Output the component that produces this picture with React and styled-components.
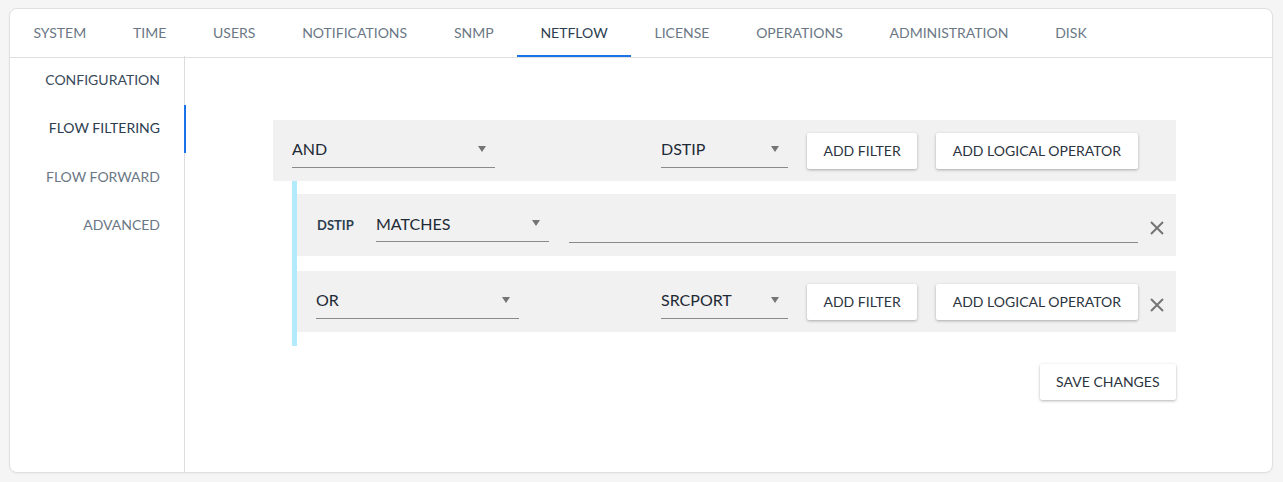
import React from "react"
import styled, { createGlobalStyle } from "styled-components"

const GlobalStyle = createGlobalStyle`
  body {
    margin: 0;
    background: #f5f5f5;
    font-family: Lato, "Open Sans", sans-serif;
  }
`

const Page = styled.div`
  padding: 8px 10px 9px 9px;
`

const Card = styled.div`
  height: 465px;
  box-sizing: border-box;
  background: #fff;
  border: 1px solid #e0e0e0;
  border-radius: 8px;
  box-shadow: 0 1px 3px rgba(0, 0, 0, 0.04);
  display: flex;
  flex-direction: column;
  overflow: hidden;
`

const Tabs = styled.div`
  display: flex;
  height: 48px;
  border-bottom: 1px solid #e0e0e0;
  flex-shrink: 0;
`

const Tab = styled.div`
  padding: 0 23.4px 2px;
  display: flex;
  align-items: center;
  font-size: 14px;
  color: ${p => (p.$active ? "#2c3e50" : "#6b7785")};
  box-shadow: ${p => (p.$active ? "inset 0 -2px 0 #1a73e8" : "none")};
`

const Body = styled.div`
  flex: 1;
  display: flex;
`

const Sidebar = styled.div`
  width: 174px;
  border-right: 1px solid #dcdcdc;
  display: flex;
  flex-direction: column;
  margin-top: -2px;
`

const SideItem = styled.div`
  position: relative;
  height: 48.5px;
  box-sizing: border-box;
  display: flex;
  align-items: center;
  justify-content: flex-end;
  padding: 0 24px 2px 0;
  font-size: 14px;
  color: ${p => p.$color};
  &::after {
    content: "";
    display: ${p => (p.$active ? "block" : "none")};
    position: absolute;
    right: -2px;
    top: 0;
    bottom: 0;
    width: 2px;
    background: #1a73e8;
  }
`

const Main = styled.div`
  flex: 1;
  padding: 62px 96px 0 88px;
`

const Row = styled.div`
  display: flex;
  background: #f1f1f1;
  height: ${p => p.$h || 61}px;
`

const LeftCell = styled.div`
  flex: 1;
  display: flex;
  align-items: center;
  padding-left: ${p => p.$pad || 19}px;
  gap: 20px;
`

const RightCell = styled.div`
  width: 533px;
  box-sizing: border-box;
  padding-left: 18px;
  display: flex;
  align-items: center;
  gap: 19px;
`

const Select = styled.div`
  width: ${p => p.$w}px;
  height: 34px;
  box-sizing: border-box;
  padding-bottom: 3px;
  border-bottom: 1px solid #8a8a8a;
  display: flex;
  align-items: center;
  justify-content: space-between;
  font-size: 16px;
  color: #1e2a36;
  padding-right: 9px;
  &::after {
    content: "";
    border-left: 4px solid transparent;
    border-right: 4px solid transparent;
    border-top: 6px solid #757575;
  }
`

const TextInput = styled.div`
  flex: 1;
  height: 34px;
  border-bottom: 1px solid #8a8a8a;
`

const FieldLabel = styled.span`
  width: 39px;
  font-size: 13px;
  font-weight: 700;
  color: #2c3e50;
`

const Button = styled.button`
  height: 36px;
  padding: 0 16.5px 1px;
  border: none;
  border-radius: 2px;
  background: #fff;
  box-shadow: 0 1px 3px rgba(0, 0, 0, 0.3);
  font-family: Lato, sans-serif;
  font-size: 14px;
  color: #2b3440;
  white-space: nowrap;
`

const CloseSlot = styled.div`
  width: 38px;
  flex-shrink: 0;
  align-self: stretch;
  display: flex;
  align-items: center;
  justify-content: center;
  padding-top: 6px;
  margin-left: ${p => (p.$inline ? "-19px" : "0")};
`

const Children = styled.div`
  margin-left: 19px;
  border-left: 5px solid #b3ebfd;
  padding: 13px 0 14px;
  display: flex;
  flex-direction: column;
  gap: 15px;
`

const Footer = styled.div`
  display: flex;
  justify-content: flex-end;
  margin-top: 18px;
`

const CloseIcon = () => (
  <svg width="14" height="14" viewBox="0 0 14 14">
    <path d="M1 1L13 13M13 1L1 13" stroke="#757575" strokeWidth="2" />
  </svg>
)

const tabs = ["SYSTEM", "TIME", "USERS", "NOTIFICATIONS", "SNMP", "NETFLOW", "LICENSE", "OPERATIONS", "ADMINISTRATION", "DISK"]

const sideItems = [
  { label: "CONFIGURATION", color: "#3a4b5c" },
  { label: "FLOW FILTERING", color: "#2c3e50", active: true },
  { label: "FLOW FORWARD", color: "#6b7785" },
  { label: "ADVANCED", color: "#6b7785" },
]

const OperatorRow = ({ op, field, closable }) => (
  <Row>
    <LeftCell>
      <Select $w={203}>{op}</Select>
    </LeftCell>
    <RightCell>
      <Select $w={127}>{field}</Select>
      <Button>ADD FILTER</Button>
      <Button>ADD LOGICAL OPERATOR</Button>
      <CloseSlot $inline>{closable && <CloseIcon />}</CloseSlot>
    </RightCell>
  </Row>
)

const App = () => (
  <Page>
    <GlobalStyle />
    <Card>
      <Tabs>
        {tabs.map(t => (
          <Tab key={t} $active={t === "NETFLOW"}>{t}</Tab>
        ))}
      </Tabs>
      <Body>
        <Sidebar>
          {sideItems.map(i => (
            <SideItem key={i.label} $color={i.color} $active={i.active}>{i.label}</SideItem>
          ))}
        </Sidebar>
        <Main>
          <OperatorRow op="AND" field="DSTIP" />
          <Children>
            <Row $h={62}>
              <LeftCell $pad={20}>
                <FieldLabel>DSTIP</FieldLabel>
                <Select $w={173}>MATCHES</Select>
                <TextInput />
              </LeftCell>
              <CloseSlot>
                <CloseIcon />
              </CloseSlot>
            </Row>
            <OperatorRow op="OR" field="SRCPORT" closable />
          </Children>
          <Footer>
            <Button>SAVE CHANGES</Button>
          </Footer>
        </Main>
      </Body>
    </Card>
  </Page>
)

export default App
